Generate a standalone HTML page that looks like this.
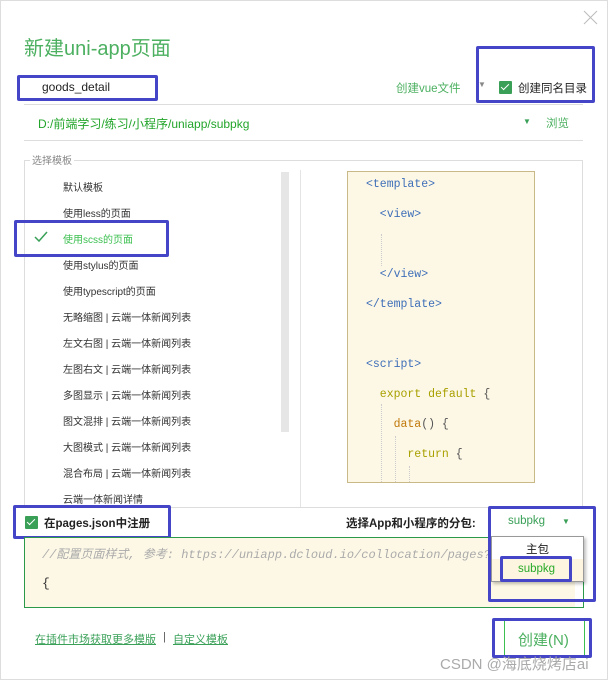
<!DOCTYPE html>
<html><head><meta charset="utf-8"><style>
*{margin:0;padding:0;box-sizing:border-box}
body{width:608px;height:680px;background:#fff;position:relative;overflow:hidden;font-family:"Liberation Sans","Noto Sans CJK SC",sans-serif;font-size:11px;color:#333}
.a{position:absolute;white-space:nowrap}
.blue{position:absolute;border:3px solid #4545c8;border-radius:2px}
.g{color:#2fa84f}
.mono{font-family:"Liberation Mono","DejaVu Sans Mono",monospace}
.chk{position:absolute;width:13px;height:13px;background:#3aa058;border-radius:1px}
.chk:after{content:"";position:absolute;left:4px;top:1px;width:3px;height:7px;border:solid #fff;border-width:0 1.5px 1.5px 0;transform:rotate(45deg)}
</style></head><body>
<div class="a" style="left:0;top:0;width:608px;height:680px;border:1px solid #ddd"></div>
<svg class="a" style="left:583px;top:10px" width="15" height="15"><path d="M1 1L14 14M14 1L1 14" stroke="#bbb" stroke-width="1"/></svg>
<div class="a" style="left:24px;top:32px;font-size:20px;color:#4cb060">新建uni-app页面</div>

<div class="a" style="left:42px;top:80px;font-size:12px;color:#222">goods_detail</div>
<div class="blue" style="left:17px;top:75px;width:141px;height:26px"></div>
<div class="a g" style="left:396px;top:80px;font-size:11.5px;color:#4cb060">创建vue文件</div>
<div class="a" style="left:478px;top:80px;font-size:8px;color:#888">▼</div>
<div class="chk" style="left:499px;top:81px"></div>
<div class="a" style="left:518px;top:80px;font-size:11.5px;color:#222">创建同名目录</div>
<div class="blue" style="left:476px;top:46px;width:119px;height:57px"></div>
<div class="a" style="left:24px;top:104px;width:559px;height:1px;background:#ddd"></div>
<div class="a" style="left:38px;top:115px;font-size:12px;color:#22a52a">D:/前端学习/练习/小程序/uniapp/subpkg</div>
<div class="a" style="left:523px;top:117px;font-size:8px;color:#3aa058">▼</div>
<div class="a" style="left:546px;top:115px;font-size:11.5px;color:#4cb060">浏览</div>
<div class="a" style="left:24px;top:140px;width:559px;height:1px;background:#ddd"></div>

<div class="a" style="left:24px;top:160px;width:559px;height:347px;border:1px solid #ddd;border-bottom:none"></div>
<div class="a" style="left:30px;top:152px;font-size:10px;color:#888;background:#fff;padding:0 2px">选择模板</div>
<div class="a" style="left:281px;top:172px;width:8px;height:260px;background:#e6e6e6"></div>
<div class="a" style="left:300px;top:170px;width:1px;height:337px;background:#e4e4e4"></div>
<div class="a" style="left:63px;top:176px;font-size:10px;line-height:26px;color:#333">
默认模板<br>使用less的页面<br><span style="color:#3cc050">使用scss的页面</span><br>使用stylus的页面<br>使用typescript的页面<br>无略缩图 | 云端一体新闻列表<br>左文右图 | 云端一体新闻列表<br>左图右文 | 云端一体新闻列表<br>多图显示 | 云端一体新闻列表<br>图文混排 | 云端一体新闻列表<br>大图模式 | 云端一体新闻列表<br>混合布局 | 云端一体新闻列表<br>云端一体新闻详情</div>
<svg class="a" style="left:34px;top:231px" width="14" height="12"><path d="M1 6L5 10L13 1" stroke="#3aa058" stroke-width="1.5" fill="none"/></svg>
<div class="blue" style="left:14px;top:220px;width:155px;height:37px"></div>

<div class="a" style="left:347px;top:171px;width:188px;height:312px;background:#fdf8e6;border:1px solid #c9b888;overflow:hidden">
<div class="a mono" style="left:18px;top:-2px;font-size:11.5px;line-height:30px;color:#3f6fb8">&lt;template&gt;<br>&nbsp;&nbsp;&lt;view&gt;<br><br>&nbsp;&nbsp;&lt;/view&gt;<br>&lt;/template&gt;<br><br>&lt;script&gt;<br><span style="color:#a8a000">&nbsp;&nbsp;export default </span><span style="color:#555">{</span><br><span style="color:#c0780a">&nbsp;&nbsp;&nbsp;&nbsp;data</span><span style="color:#555">() {</span><br><span style="color:#a8a000">&nbsp;&nbsp;&nbsp;&nbsp;&nbsp;&nbsp;return </span><span style="color:#555">{</span></div>
<div class="a" style="left:33px;top:62px;height:32px;border-left:1px dotted #ccc"></div>
<div class="a" style="left:33px;top:232px;height:80px;border-left:1px dotted #ccc"></div>
<div class="a" style="left:47px;top:264px;height:50px;border-left:1px dotted #ccc"></div>
<div class="a" style="left:61px;top:294px;height:20px;border-left:1px dotted #ccc"></div>
</div>

<div class="a" style="left:24px;top:507px;width:559px;height:1px;background:#ddd"></div>
<div class="chk" style="left:25px;top:516px"></div>
<div class="a" style="left:44px;top:515px;font-size:11.5px;font-weight:bold;color:#222">在pages.json中注册</div>
<div class="blue" style="left:13px;top:505px;width:158px;height:34px"></div>
<div class="a" style="left:346px;top:515px;font-size:11.5px;font-weight:bold;color:#222">选择App和小程序的分包:</div>
<div class="a" style="left:508px;top:515px;font-size:11.5px;color:#3aa058">subpkg</div>
<div class="a" style="left:562px;top:517px;font-size:8px;color:#3aa058">▼</div>

<div class="a" style="left:24px;top:537px;width:560px;height:71px;border:1px solid #2a9a4a;background:#fff"></div>
<div class="a" style="left:25px;top:538px;width:550px;height:69px;background:#fdf8e6"></div>
<div class="a mono" style="left:42px;top:545px;font-size:12px;font-style:italic;color:#aaa">//配置页面样式, 参考: https://uniapp.dcloud.io/collocation/pages?</div>
<div class="a mono" style="left:42px;top:576px;font-size:13px;color:#333">{</div>

<div class="a" style="left:491px;top:536px;width:93px;height:46px;background:#fff;border:1px solid #999;box-shadow:2px 2px 3px rgba(0,0,0,.25)"></div>
<div class="a" style="left:492px;top:559px;width:91px;height:22px;background:#fdf5e0"></div>
<div class="a" style="left:526px;top:541px;font-size:11.5px;color:#222">主包</div>
<div class="a" style="left:518px;top:563px;font-size:11.5px;color:#2aaa2a">subpkg</div>
<div class="blue" style="left:500px;top:556px;width:72px;height:26px"></div>
<div class="blue" style="left:488px;top:506px;width:108px;height:96px"></div>

<div class="a" style="left:35px;top:631px;font-size:11px;color:#3aa058;text-decoration:underline">在插件市场获取更多模版</div>
<div class="a" style="left:163px;top:631px;font-size:11px;color:#555">|</div>
<div class="a" style="left:173px;top:631px;font-size:11px;color:#3aa058;text-decoration:underline">自定义模板</div>

<div class="a" style="left:504px;top:620px;width:1px;height:38px;background:#3cc050"></div>
<div class="a" style="left:584px;top:620px;width:1px;height:38px;background:#3cc050"></div>
<div class="a" style="left:518px;top:629px;font-size:15px;color:#4cb060">创建(N)</div>
<div class="blue" style="left:492px;top:618px;width:100px;height:40px"></div>
<div class="a" style="left:440px;top:653px;font-size:15px;color:#aaa">CSDN @海底烧烤店ai</div>
</body></html>
